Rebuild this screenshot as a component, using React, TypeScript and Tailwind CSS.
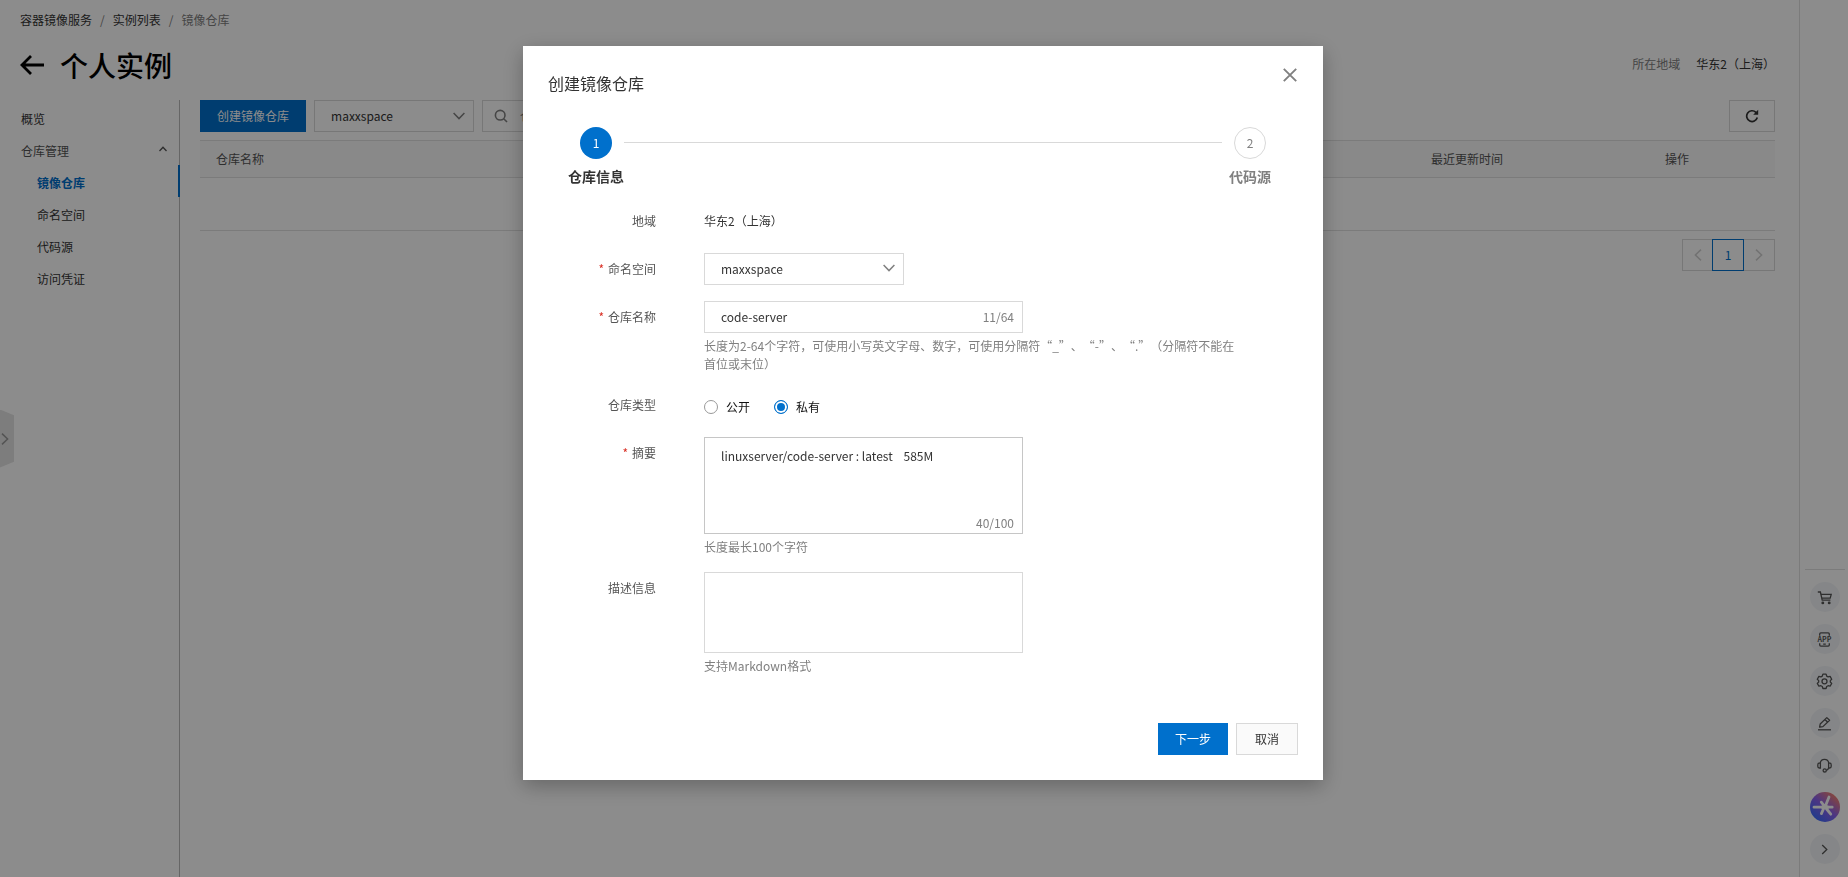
import { useState } from 'react'
import type { ReactNode } from 'react'
import { clsx } from 'clsx'

const NAV_ITEMS = ['镜像仓库', '命名空间', '代码源', '访问凭证']

function Chevron({ className }: { className?: string }) {
  return (
    <svg viewBox="0 0 12 8" className={clsx('h-2 w-3', className)} fill="none" stroke="currentColor" strokeWidth="1.5">
      <path d="M0.6 1 6 6.6 11.4 1" />
    </svg>
  )
}

function SearchIcon() {
  return (
    <svg viewBox="0 0 14 14" className="h-3.5 w-3.5 shrink-0 text-[#808080]" fill="none" stroke="currentColor" strokeWidth="1.6">
      <circle cx="6.2" cy="6.2" r="4.8" />
      <path d="M9.7 9.7 13 13" />
    </svg>
  )
}

function RefreshIcon() {
  return (
    <svg viewBox="0 0 14 14" className="h-3.5 w-3.5" fill="none" stroke="currentColor" strokeWidth="1.7">
      <path d="M12.3 8.6A5.4 5.4 0 1 1 10.9 3.3L12 4.5" />
      <path d="M13.2 0.8v5H8.2z" fill="currentColor" stroke="none" />
    </svg>
  )
}

function CartIcon() {
  return (
    <>
      <path d="M0.8 2h2.6l1.8 8.2h8.2" />
      <path d="M3.9 4.4h10.3l-1 3.7H4.8" />
      <circle cx="5.8" cy="12.9" r="0.8" fill="currentColor" />
      <circle cx="12.2" cy="12.9" r="0.8" fill="currentColor" />
    </>
  )
}

function AppIcon() {
  return (
    <>
      <path d="M2.7 3.8V1.9c0-.7.4-1.1 1.1-1.1h7.4c.7 0 1.1.4 1.1 1.1v1.9M2.7 11.2v1.9c0 .7.4 1.1 1.1 1.1h7.4c.7 0 1.1-.4 1.1-1.1v-1.9M6.2 12.2h2.6" />
      <text x="7.5" y="10" textAnchor="middle" fontSize="7" fontWeight="700" fill="currentColor" stroke="none">
        APP
      </text>
    </>
  )
}

function GearIcon() {
  return (
    <>
      <path
        d="M5.9 0.1h3.2l.6 2 1.4.8 2-.5 1.6 2.8-1.4 1.4v1.4l1.4 1.4-1.6 2.8-2-.5-1.4.8-.6 2H5.9l-.6-2-1.4-.8-2 .5L.3 9.4l1.4-1.4V6.6L.3 5.2l1.6-2.8 2 .5 1.4-.8z"
        strokeLinejoin="round"
      />
      <circle cx="7.5" cy="7.3" r="2.5" />
    </>
  )
}

function PencilIcon() {
  return (
    <>
      <path d="M2.6 11.1 3.2 8l6.6-6.4 2.8 2.7-6.7 6.3zM8 3.5l2.7 2.7" strokeLinejoin="round" />
      <path d="M1 13.8h13" />
    </>
  )
}

function HeadsetIcon() {
  return (
    <>
      <path d="M3.2 5.2C3.6 2.8 5.3 1.4 7.5 1.4s3.9 1.4 4.3 3.8" />
      <path d="M3.4 5.2H2.2C1.2 5.2.8 5.8.8 7v1.2c0 1.2.4 1.8 1.4 1.8h1.2zM11.6 5.2h1.2c1 0 1.4.6 1.4 1.8v1.2c0 1.2-.4 1.8-1.4 1.8h-1.2zM11.6 10c-.3 1.3-1.2 2.1-2.3 2.4" />
      <circle cx="7.7" cy="12.4" r="1.6" />
    </>
  )
}

function RailButton({ label, children }: { label: string; children: ReactNode }) {
  return (
    <button type="button" aria-label={label} className="flex size-[30px] items-center justify-center rounded-full bg-[#f3f5f8] text-[#555]">
      <svg viewBox="0 0 15 15" className="size-[15px] overflow-visible" fill="none" stroke="currentColor" strokeWidth="1.3">
        {children}
      </svg>
    </button>
  )
}

function AssistantLogo() {
  return (
    <svg viewBox="0 0 30 30" className="size-[30px]">
      <defs>
        <linearGradient id="assistant-bg" x1="0.15" y1="0.9" x2="0.85" y2="0.1">
          <stop offset="0" stopColor="#3a6cff" />
          <stop offset="0.5" stopColor="#8b62ee" />
          <stop offset="1" stopColor="#f5806f" />
        </linearGradient>
      </defs>
      <circle cx="15" cy="15" r="15" fill="url(#assistant-bg)" />
      <g stroke="#fff" strokeWidth="2.8" strokeLinecap="round">
        <path d="M4 15.2h9M17 15.2h5.2M19 5l-3.2 8M11.3 10.2l2.6 3.2M16.6 17l4.2 5.2M13.4 17l-2 4.6" />
        <path d="M13 15.2h4" strokeWidth="4" />
      </g>
    </svg>
  )
}

function SideRail() {
  return (
    <aside className="flex w-[49px] shrink-0 flex-col items-center justify-end gap-3 border-l border-[#e0e0e0] pb-[13px] pl-px">
      <div className="h-px w-10 bg-[#e0e0e0]" />
      <RailButton label="购物车">
        <CartIcon />
      </RailButton>
      <RailButton label="APP">
        <AppIcon />
      </RailButton>
      <RailButton label="设置">
        <GearIcon />
      </RailButton>
      <RailButton label="反馈">
        <PencilIcon />
      </RailButton>
      <RailButton label="客服">
        <HeadsetIcon />
      </RailButton>
      <button type="button" aria-label="助手">
        <AssistantLogo />
      </button>
      <RailButton label="收起">
        <path d="M5.2 3 9.8 7.5 5.2 12" />
      </RailButton>
    </aside>
  )
}

function Sidebar() {
  return (
    <nav className="w-[180px] shrink-0 border-r border-[#bbb] pt-px leading-7">
      <a href="#overview" className="block pl-[21px] pt-1">
        概览
      </a>
      <button type="button" className="flex w-full items-center justify-between pl-[21px] pr-3 pt-1 text-[#555]">
        仓库管理
        <svg viewBox="0 0 8 6" className="mb-1 h-1.5 w-2" fill="none" stroke="currentColor" strokeWidth="1.3">
          <path d="M0.5 5 4 1.2 7.5 5" />
        </svg>
      </button>
      {NAV_ITEMS.map((item, i) => (
        <a key={item} href={`#${item}`} className={clsx('-mr-px block pl-[37px] pt-1', i === 0 && 'border-r-2 border-[#0070cc] font-bold text-[#0070cc]')}>
          {item}
        </a>
      ))}
    </nav>
  )
}

function RepoList() {
  return (
    <main className="min-w-0 flex-1 pl-5 pr-6">
      <div className="flex h-8 gap-2">
        <button type="button" className="bg-[#0070cc] px-[17px] text-white">
          创建镜像仓库
        </button>
        <div className="relative w-40">
          <select aria-label="命名空间" className="h-8 w-full appearance-none border border-[#d9d9d9] pl-4">
            <option>maxxspace</option>
          </select>
          <Chevron className="pointer-events-none absolute right-[9px] top-3 text-[#808080]" />
        </div>
        <label className="flex w-64 items-center gap-3 border border-[#d9d9d9] pl-[11px]">
          <SearchIcon />
          <input aria-label="搜索" placeholder="仓库名称" className="min-w-0 flex-1 outline-none placeholder:text-[#808080]" />
        </label>
        <button type="button" aria-label="刷新" className="ml-auto flex w-[46px] items-center justify-center border border-[#d9d9d9]">
          <RefreshIcon />
        </button>
      </div>

      <table className="mt-2 w-full table-fixed border-collapse text-left">
        <thead>
          <tr className="h-[37px] border-y border-[#e0e0e0] bg-[#f9f9f9] text-[#555]">
            <th className="px-4 font-normal">仓库名称</th>
            <th className="w-[234px] px-4 font-normal">最近更新时间</th>
            <th className="w-[8%] px-4 font-normal">操作</th>
          </tr>
        </thead>
        <tbody>
          <tr className="h-[53px] border-b border-[#e0e0e0]">
            <td colSpan={3} />
          </tr>
        </tbody>
      </table>

      <div className="mt-2 flex justify-end">
        <button type="button" aria-label="上一页" disabled className="flex h-8 w-[30px] items-center justify-center border border-r-0 border-[#d9d9d9] text-[#d0d0d0]">
          <Chevron className="rotate-90" />
        </button>
        <button type="button" className="h-8 w-8 border border-[#0070cc] text-[#0070cc]">
          1
        </button>
        <button type="button" aria-label="下一页" disabled className="flex h-8 w-[31px] items-center justify-center border border-l-0 border-[#d9d9d9] text-[#d0d0d0]">
          <Chevron className="-rotate-90" />
        </button>
      </div>
    </main>
  )
}

interface FieldProps {
  label: string
  htmlFor?: string
  required?: boolean
  help?: string
  children: ReactNode
}

function Field({ label, htmlFor, required, help, children }: FieldProps) {
  return (
    <div className="flex gap-12">
      <label htmlFor={htmlFor} className="w-[108px] shrink-0 text-right leading-8 text-[#555]">
        {required ? <span className="mr-1 text-[#d93026]">*</span> : null}
        {label}
      </label>
      <div className="min-w-0 flex-1">
        {children}
        {help ? <p className="mt-1 leading-[18px] text-[#808080]">{help}</p> : null}
      </div>
    </div>
  )
}

function Steps() {
  return (
    <ol className="mt-8 flex px-5 text-center">
      <li className="w-14">
        <div className="mx-auto h-8 w-8 rounded-full bg-[#0070cc] leading-8 text-white">1</div>
        <div className="mt-[7px] text-sm font-bold">仓库信息</div>
      </li>
      <li aria-hidden className="mt-[15px] h-px flex-1 bg-[#d9d9d9]" />
      <li className="w-14 text-[#808080]">
        <div className="mx-auto h-8 w-8 rounded-full border border-[#d9d9d9] leading-[30px]">2</div>
        <div className="mt-[7px] text-sm font-bold">代码源</div>
      </li>
    </ol>
  )
}

function CreateRepoDialog() {
  const [name, setName] = useState('code-server')
  const [summary, setSummary] = useState('linuxserver/code-server : latest    585M')
  const [visibility, setVisibility] = useState('私有')

  return (
    <div role="dialog" aria-modal="true" aria-labelledby="dialog-title" className="relative w-[800px] bg-white p-[25px] shadow-[0_6px_20px_rgba(0,0,0,0.28)]">
      <h2 id="dialog-title" className="text-base">
        创建镜像仓库
      </h2>
      <button type="button" aria-label="关闭" className="absolute right-[26px] top-[22px] text-[#808080]">
        <svg viewBox="0 0 14 14" className="h-3.5 w-3.5" fill="none" stroke="currentColor" strokeWidth="1.9">
          <path d="M0.8 0.8 13.2 13.2M13.2 0.8 0.8 13.2" />
        </svg>
      </button>

      <Steps />

      <form className="mt-[19px] flex flex-col gap-4 pr-14" onSubmit={(e) => e.preventDefault()}>
        <Field label="地域">
          <div className="leading-8">华东2（上海）</div>
        </Field>
        <Field label="命名空间" htmlFor="namespace" required>
          <div className="relative w-[200px]">
            <select id="namespace" className="block h-8 w-full appearance-none border border-[#d9d9d9] pl-4">
              <option>maxxspace</option>
            </select>
            <Chevron className="pointer-events-none absolute right-[9px] top-[11px] text-[#808080]" />
          </div>
        </Field>
        <Field
          label="仓库名称"
          htmlFor="repo-name"
          required
          help="长度为2-64个字符，可使用小写英文字母、数字，可使用分隔符“_”、“-”、“.”（分隔符不能在首位或末位）"
        >
          <div className="flex h-8 w-[319px] items-center border border-[#d9d9d9] pl-4 pr-2">
            <input id="repo-name" value={name} onChange={(e) => setName(e.target.value)} className="min-w-0 flex-1 outline-none" />
            <span className="text-[#808080]">{name.length}/64</span>
          </div>
        </Field>
        <Field label="仓库类型">
          <div className="flex h-9 items-center gap-6 text-[#111]">
            {['公开', '私有'].map((v) => (
              <label key={v} className="flex items-center gap-2">
                <input
                  type="radio"
                  name="visibility"
                  checked={visibility === v}
                  onChange={() => setVisibility(v)}
                  className="size-3.5 appearance-none rounded-full border border-[#999] checked:border-[#0070cc] checked:bg-[#0070cc] checked:shadow-[inset_0_0_0_2px_#fff]"
                />
                {v}
              </label>
            ))}
          </div>
        </Field>
        <div className="-mt-1">
          <Field label="摘要" htmlFor="summary" required help="长度最长100个字符">
            <div className="flex h-[97px] w-[319px] flex-col border border-[#c6c6c6] pb-0.5">
              <textarea
                id="summary"
                value={summary}
                onChange={(e) => setSummary(e.target.value)}
                className="min-h-0 flex-1 resize-none px-4 pt-2 leading-5 outline-none"
              />
              <span className="pr-2 text-right leading-4 text-[#808080]">{summary.length}/100</span>
            </div>
          </Field>
        </div>
        <Field label="描述信息" htmlFor="description" help="支持Markdown格式">
          <textarea id="description" className="block h-[81px] w-[319px] resize-none border border-[#d9d9d9] px-4 pt-2 leading-5 outline-none" />
        </Field>
      </form>

      <div className="mt-12 flex justify-end gap-2">
        <button type="button" className="h-8 w-[70px] bg-[#0070cc] text-white">
          下一步
        </button>
        <button type="button" className="h-8 w-[62px] border border-[#d9d9d9] bg-[#fafafa]">
          取消
        </button>
      </div>
    </div>
  )
}

export default function App() {
  return (
    <div lang="zh-CN" className="flex min-h-screen bg-white font-['Noto_Sans_CJK_SC',sans-serif] text-xs text-[#333] [text-spacing-trim:space-all]">
      <div className="flex min-w-0 flex-1 flex-col">
        <nav aria-label="面包屑" className="flex gap-2 pl-5 pt-3 leading-4">
          <a href="#acr">容器镜像服务</a>
          <span className="text-[#808080]">/</span>
          <a href="#instances">实例列表</a>
          <span className="text-[#808080]">/</span>
          <span className="text-[#808080]">镜像仓库</span>
        </nav>
        <header className="flex h-[72px] items-center pl-5 pr-6">
          <div className="flex items-center gap-4 pt-0.5 text-black">
            <a href="#back" aria-label="返回">
              <svg viewBox="0 0 24 20" className="h-5 w-6" fill="none" stroke="currentColor" strokeWidth="2.8">
                <path d="M11 1 2 10l9 9M2 10h22" />
              </svg>
            </a>
            <h1 className="text-[28px] font-medium leading-9">个人实例</h1>
          </div>
          <span className="ml-auto text-[#808080]">所在地域</span>
          <span className="ml-4">华东2（上海）</span>
        </header>
        <div className="flex flex-1">
          <Sidebar />
          <RepoList />
        </div>
      </div>
      <SideRail />

      <button
        type="button"
        aria-label="展开侧栏"
        className="fixed left-0 top-1/2 flex h-[58px] w-3.5 -translate-y-1/2 items-center justify-center bg-[#e4e4e4] pr-1 text-[#999] [clip-path:polygon(0_0,100%_10%,100%_90%,0_100%)]"
      >
        <Chevron className="shrink-0 -rotate-90" />
      </button>

      <div className="fixed inset-0 flex items-start justify-center bg-black/45 pr-0.5 pt-[46px]">
        <CreateRepoDialog />
      </div>
    </div>
  )
}
